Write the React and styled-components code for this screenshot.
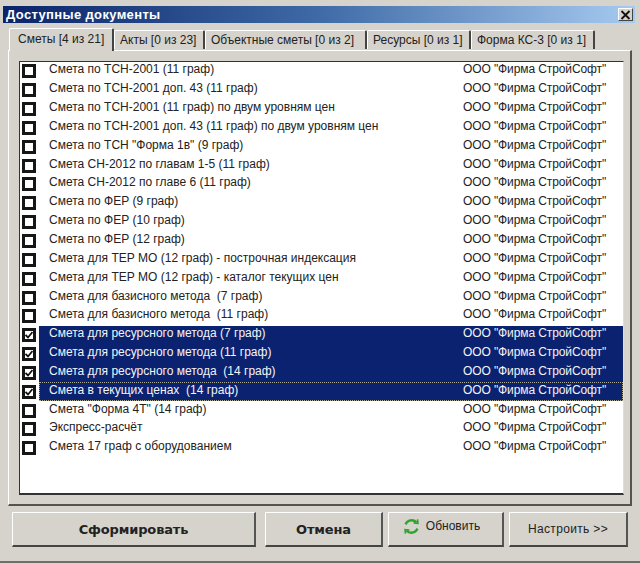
import React from 'react';
import styled, { createGlobalStyle } from 'styled-components';

const GlobalStyle = createGlobalStyle`
  html, body { margin: 0; padding: 0; background: #d6d3cc; }
  * { box-sizing: border-box; }
`;

const tabs = [
  { label: 'Сметы [4 из 21]', width: 105, active: true },
  { label: 'Акты [0 из 23]', width: 91 },
  { label: 'Объектные сметы [0 из 2]', width: 162 },
  { label: 'Ресурсы [0 из 1]', width: 104 },
  { label: 'Форма КС-3 [0 из 1]', width: 124 },
];

const rows = [
  { name: 'Смета по ТСН-2001 (11 граф)' },
  { name: 'Смета по ТСН-2001 доп. 43 (11 граф)' },
  { name: 'Смета по ТСН-2001 (11 граф) по двум уровням цен' },
  { name: 'Смета по ТСН-2001 доп. 43 (11 граф) по двум уровням цен' },
  { name: 'Смета по ТСН "Форма 1в" (9 граф)' },
  { name: 'Смета СН-2012 по главам 1-5 (11 граф)' },
  { name: 'Смета СН-2012 по главе 6 (11 граф)' },
  { name: 'Смета по ФЕР (9 граф)' },
  { name: 'Смета по ФЕР (10 граф)' },
  { name: 'Смета по ФЕР (12 граф)' },
  { name: 'Смета для ТЕР МО (12 граф) - построчная индексация' },
  { name: 'Смета для ТЕР МО (12 граф) - каталог текущих цен' },
  { name: 'Смета для базисного метода  (7 граф)' },
  { name: 'Смета для базисного метода  (11 граф)' },
  { name: 'Смета для ресурсного метода (7 граф)', checked: true },
  { name: 'Смета для ресурсного метода (11 граф)', checked: true },
  { name: 'Смета для ресурсного метода  (14 граф)', checked: true },
  { name: 'Смета в текущих ценах  (14 граф)', checked: true, focused: true },
  { name: 'Смета "Форма 4Т" (14 граф)' },
  { name: 'Экспресс-расчёт' },
  { name: 'Смета 17 граф с оборудованием' },
];

const App = () => {
  return (
    <>
      <GlobalStyle />
      <Window>
        <TitleBar>
          <Title>Доступные документы</Title>
          <CloseButton>
            <svg width="11" height="10" viewBox="0 0 11 10">
              <path d="M1.5 1 L9.5 9 M9.5 1 L1.5 9" stroke="#111" strokeWidth="1.8" fill="none" />
            </svg>
          </CloseButton>
        </TitleBar>
        <TabRow>
          {tabs.map((tab) => (
            <Tab key={tab.label} $active={tab.active} $width={tab.width}>
              {tab.label}
            </Tab>
          ))}
        </TabRow>
        <Panel>
          <List>
            {rows.map((row) => (
              <Row key={row.name}>
                <CheckBox>
                  {row.checked && (
                    <svg width="8" height="8" viewBox="0 0 8 8">
                      <path d="M0.5 4 L3 6.5 L7.5 1" stroke="#111" strokeWidth="1.8" fill="none" />
                    </svg>
                  )}
                </CheckBox>
                <RowBody $selected={row.checked} $focused={row.focused}>
                  <RowName>{row.name}</RowName>
                  <RowVendor>ООО "Фирма СтройСофт"</RowVendor>
                </RowBody>
              </Row>
            ))}
          </List>
        </Panel>
        <Footer>
          <BigButton $width={244} $heavy>Сформировать</BigButton>
          <BigButton $width={118} $heavy>Отмена</BigButton>
          <Buttons>
            <BigButton $width={116} $raised>
              <svg width="17" height="17" viewBox="0 0 24 24" fill="none" stroke="#2fa52f" strokeWidth="3.4">
                <path d="M19 6 A9.5 9.5 0 0 0 5 6.5 L3.5 9" />
                <path d="M5 18 A9.5 9.5 0 0 0 19 17.5 L20.5 15" />
                <path d="M15 7 L21 7.5 L20.5 2" strokeWidth="2.4" />
                <path d="M9 17 L3 16.5 L3.5 22" strokeWidth="2.4" />
              </svg>
              Обновить
            </BigButton>
            <BigButton $width={119} $wide>Настроить &gt;&gt;</BigButton>
          </Buttons>
        </Footer>
      </Window>
    </>
  );
};

const Window = styled.div`
  width: 640px;
  height: 563px;
  overflow: hidden;
  padding: 6px 3px 0;
  background: #d6d3cc;
  border-bottom: 2px solid #6e6c68;
  font-family: 'Liberation Sans', Arial, sans-serif;
`;

const TitleBar = styled.div`
  height: 17px;
  margin-right: 2px;
  display: flex;
  align-items: center;
  justify-content: space-between;
  padding: 0 2px 0 3px;
  background: linear-gradient(90deg, #0a246a 0%, #3f6aa6 50%, #a6caf0 100%);
`;

const Title = styled.div`
  color: #fff;
  font-size: 13px;
  font-weight: bold;
  letter-spacing: 0.35px;
`;

const CloseButton = styled.div`
  width: 15px;
  height: 13px;
  display: flex;
  align-items: center;
  justify-content: center;
  background: #d6d3cc;
  border-top: 1px solid #fff;
  border-left: 1px solid #fff;
  border-right: 1px solid #444;
  border-bottom: 1px solid #444;
`;

const TabRow = styled.div`
  height: 27px;
  display: flex;
  align-items: flex-end;
  padding-left: 6px;
  position: relative;
  z-index: 1;
`;

const Tab = styled.div`
  width: ${(props) => props.$width}px;
  height: ${(props) => (props.$active ? 23 : 19)}px;
  margin-bottom: ${(props) => (props.$active ? -1 : 1)}px;
  padding: ${(props) => (props.$active ? '0 0 3px 8px' : '0 0 0 5px')};
  display: flex;
  align-items: center;
  font-size: 12px;
  color: #222;
  white-space: nowrap;
  background: #d6d3cc;
  border-top: 1px solid #fff;
  border-left: 1px solid #fff;
  border-right: 2px solid #444;
  border-top-left-radius: 2px;
  border-top-right-radius: 2px;
`;

const Panel = styled.div`
  width: 624px;
  height: 456px;
  margin-left: 5px;
  padding: 10px 6px 0 10px;
  border-top: 1px solid #fff;
  border-left: 1px solid #fff;
  border-right: 2px solid #55534f;
  border-bottom: 2px solid #55534f;
`;

const List = styled.div`
  height: 434px;
  padding: 0 0 0 2px;
  overflow: hidden;
  background: #fff;
  border: 1px solid #333;
  border-right-color: #ddd;
  border-bottom-width: 2px;
`;

const Row = styled.div`
  height: 18.85px;
  display: flex;
  align-items: center;
  gap: 3px;
`;

const CheckBox = styled.div`
  width: 14px;
  height: 14px;
  flex-shrink: 0;
  display: flex;
  align-items: center;
  justify-content: center;
  background: #fff;
  border: 3px solid #161616;
`;

const RowBody = styled.div`
  flex: 1;
  height: 100%;
  display: flex;
  align-items: center;
  padding: 0 0 4px 10px;
  font-size: 12px;
  color: ${(props) => (props.$selected ? '#f4f4f4' : '#222')};
  background: ${(props) => (props.$selected ? '#0b2270' : 'transparent')};
  outline: ${(props) => (props.$focused ? '1px dotted #a8a890' : 'none')};
  outline-offset: -1px;
`;

const RowName = styled.div`
  width: 414px;
  flex-shrink: 0;
  white-space: pre;
`;

const RowVendor = styled.div`
  white-space: nowrap;
  letter-spacing: -0.1px;
`;

const Footer = styled.div`
  display: flex;
  padding: 6px 0 0 9px;
  gap: 9px;
`;

const Buttons = styled.div`
  display: flex;
  gap: 5px;
  margin-left: -4px;
`;

const BigButton = styled.div`
  width: ${(props) => props.$width}px;
  height: 35px;
  display: flex;
  align-items: center;
  justify-content: center;
  gap: 6px;
  padding-bottom: ${(props) => (props.$raised ? 6 : 0)}px;
  padding-right: ${(props) => (props.$raised ? 8 : 0)}px;
  font-family: ${(props) => (props.$heavy ? "'DejaVu Sans', sans-serif" : "'Liberation Sans', Arial, sans-serif")};
  font-size: ${(props) => (props.$heavy ? 13 : 12)}px;
  font-weight: ${(props) => (props.$heavy ? 'bold' : 'normal')};
  letter-spacing: ${(props) => (props.$heavy ? '-0.15px' : props.$wide ? '0.35px' : '0')};
  color: #222;
  background: #d6d3cc;
  border-top: 1px solid #fff;
  border-left: 1px solid #fff;
  border-right: 2px solid #555;
  border-bottom: 2px solid #444;
`;

export default App;
